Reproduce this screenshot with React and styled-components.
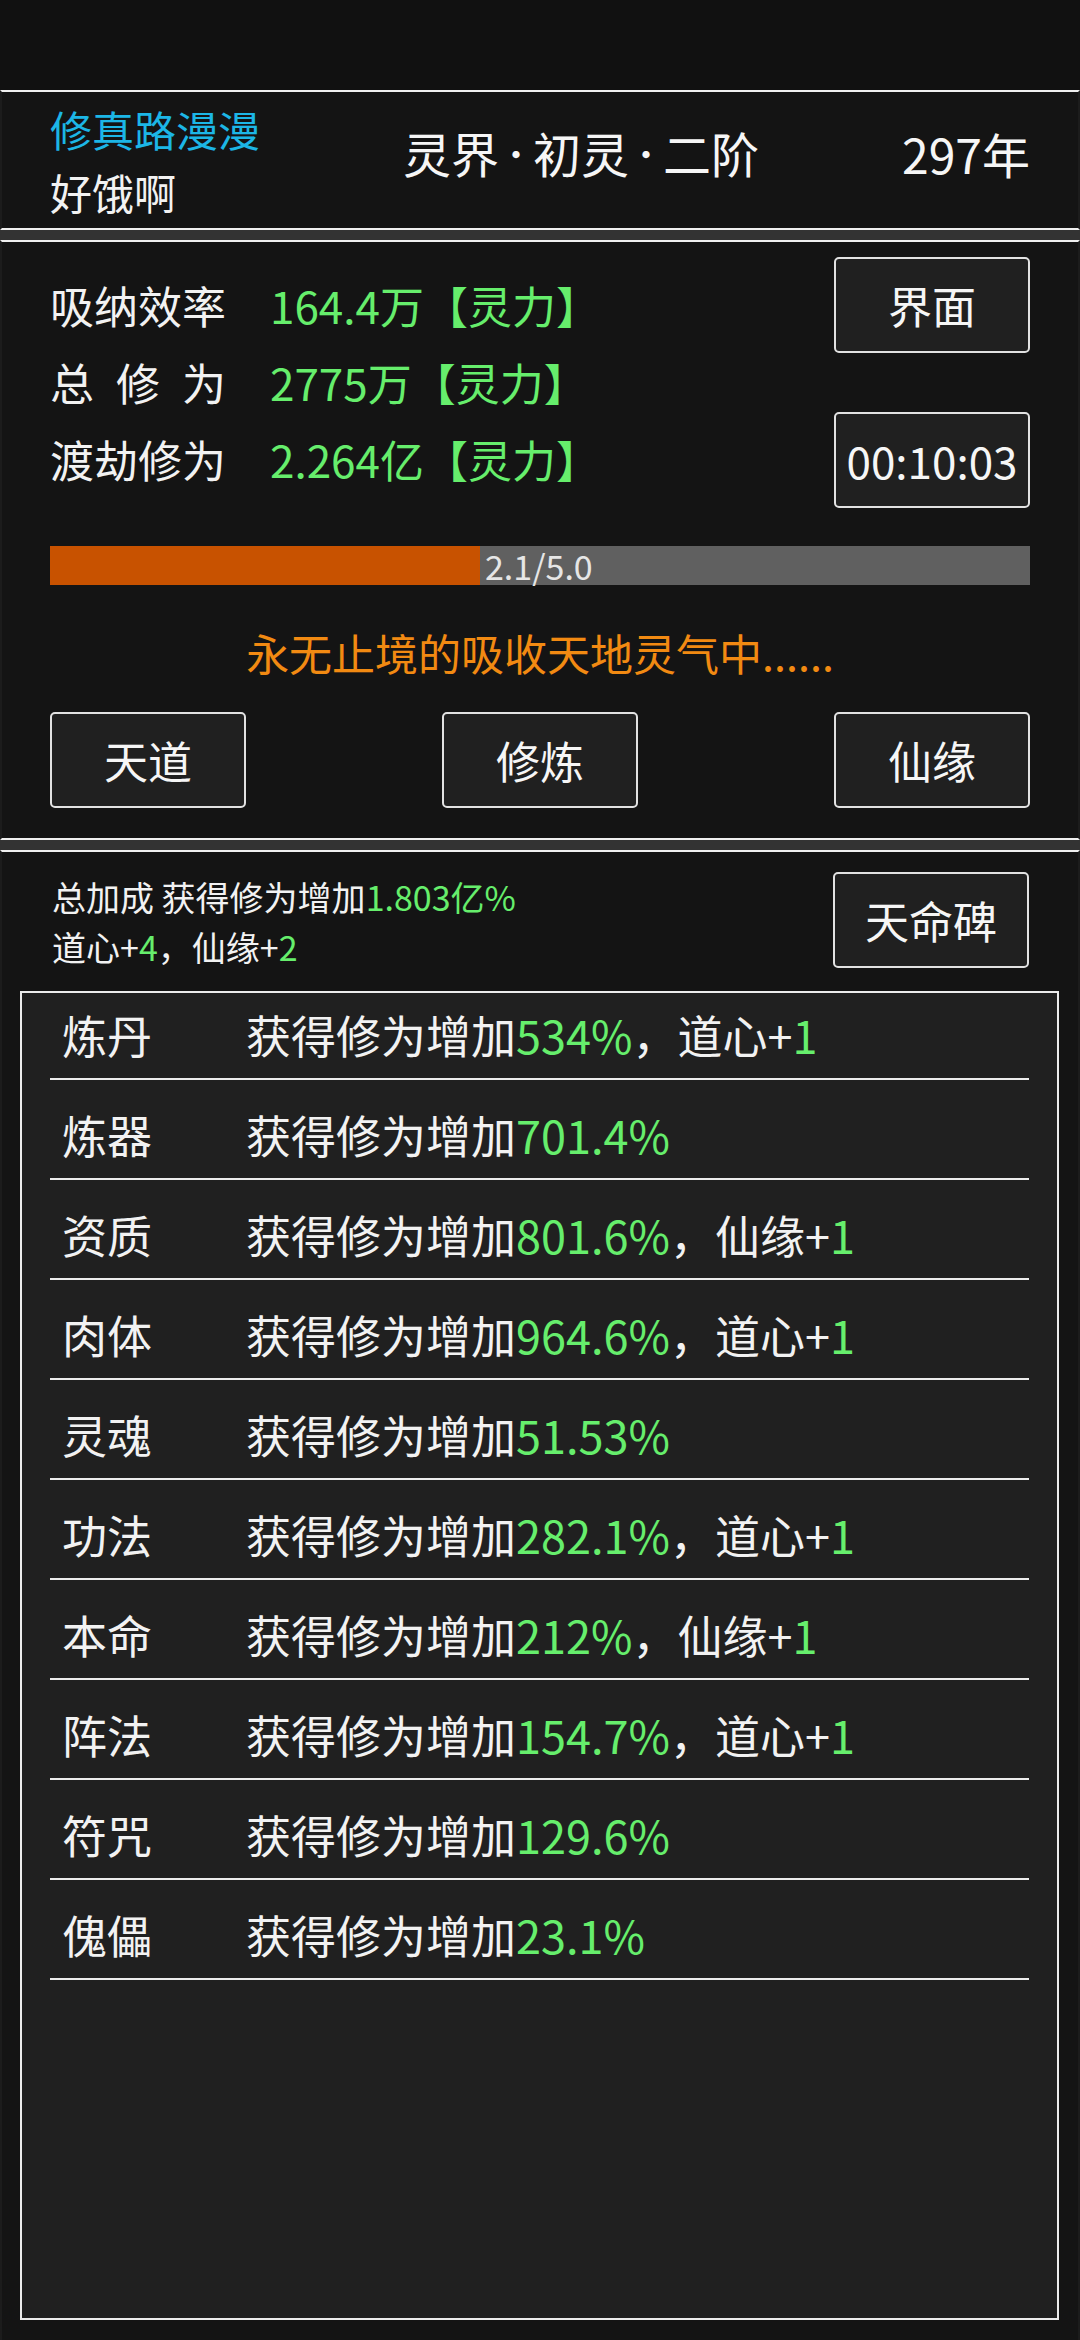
import React from 'react'
import styled, { createGlobalStyle } from 'styled-components'

const GlobalStyle = createGlobalStyle`
  html, body { margin: 0; padding: 0; background: #111; }
  body { font-family: "Noto Sans CJK SC", "Noto Sans", sans-serif; color: #f2f2f2; }
  * { box-sizing: border-box; }
`

const rows = [
  { name: '炼丹', pct: '534%', extra: '道心', add: '1' },
  { name: '炼器', pct: '701.4%' },
  { name: '资质', pct: '801.6%', extra: '仙缘', add: '1' },
  { name: '肉体', pct: '964.6%', extra: '道心', add: '1' },
  { name: '灵魂', pct: '51.53%' },
  { name: '功法', pct: '282.1%', extra: '道心', add: '1' },
  { name: '本命', pct: '212%', extra: '仙缘', add: '1' },
  { name: '阵法', pct: '154.7%', extra: '道心', add: '1' },
  { name: '符咒', pct: '129.6%' },
  { name: '傀儡', pct: '23.1%' },
]

const App = () => {
  return (
    <>
      <GlobalStyle />
      <Page>
        <TopBar />
        <Panel>
          <Header>
            <NameCol>
              <Nick>修真路漫漫</Nick>
              <Mood>好饿啊</Mood>
            </NameCol>
            <Realm>灵界<Dot>·</Dot>初灵<Dot>·</Dot>二阶</Realm>
            <Years>297年</Years>
          </Header>
        </Panel>
        <Gap />
        <Panel>
          <StatsArea>
            <Stats>
              <StatLine><Label>吸纳效率</Label><Value>164.4万【灵力】</Value></StatLine>
              <StatLine><Label>总 修 为</Label><Value>2775万【灵力】</Value></StatLine>
              <StatLine><Label>渡劫修为</Label><Value>2.264亿【灵力】</Value></StatLine>
            </Stats>
            <SideButtons>
              <Button>界面</Button>
              <Button>00:10:03</Button>
            </SideButtons>
          </StatsArea>
          <Track>
            <Fill style={{ width: 430 }} />
            <TrackText>2.1/5.0</TrackText>
          </Track>
          <Status>永无止境的吸收天地灵气中......</Status>
          <ButtonRow>
            <Button>天道</Button>
            <Button>修炼</Button>
            <Button>仙缘</Button>
          </ButtonRow>
        </Panel>
        <Gap />
        <LastPanel>
          <SummaryRow>
            <Summary>
              <div>总加成 获得修为增加<Green>1.803亿%</Green></div>
              <div>道心+<Green>4</Green>，仙缘+<Green>2</Green></div>
            </Summary>
            <Button>天命碑</Button>
          </SummaryRow>
          <ListBox>
            {rows.map((r) => (
              <Row key={r.name}>
                <RowName>{r.name}</RowName>
                <span>
                  获得修为增加<Green>{r.pct}</Green>
                  {r.extra && <>，{r.extra}+<Green>{r.add}</Green></>}
                </span>
              </Row>
            ))}
          </ListBox>
        </LastPanel>
      </Page>
    </>
  )
}

export default App

const Page = styled.div`
  min-height: 100vh;
  display: flex;
  flex-direction: column;
  background: #111;
`
const TopBar = styled.div`
  height: 90px;
  background: #111;
`
const Panel = styled.div`
  background: #141414;
  border-top: 2px solid #f0f0f0;
  border-bottom: 2px solid #f0f0f0;
  border-left: 2px solid #1c1c1c;
  border-right: 2px solid #1c1c1c;
  padding: 0 48px;
`
const LastPanel = styled(Panel)`
  flex: 1;
  display: flex;
  flex-direction: column;
  border-bottom: none;
  padding: 20px 19px 20px 18px;
`
const Gap = styled.div`
  height: 10px;
  background: #333;
`
const Header = styled.div`
  height: 136px;
  display: flex;
  align-items: center;
  justify-content: space-between;
`
const NameCol = styled.div`
  display: flex;
  flex-direction: column;
  font-size: 42px;
  line-height: 63px;
`
const Nick = styled.div`
  color: #1cb6e6;
`
const Mood = styled.div`
  color: #f2f2f2;
`
const Realm = styled.div`
  font-size: 48px;
  line-height: 60px;
  margin-bottom: 14px;
  color: #f6f6f6;
  white-space: nowrap;
`
const Dot = styled.span`
  font-size: 34px;
  vertical-align: 5px;
`
const Years = styled.div`
  font-size: 48px;
  line-height: 60px;
  margin-bottom: 14px;
  color: #f6f6f6;
`
const StatsArea = styled.div`
  display: flex;
  justify-content: space-between;
  align-items: center;
  padding-top: 15px;
`
const Stats = styled.div`
  display: flex;
  flex-direction: column;
  font-size: 44px;
  line-height: 77px;
`
const StatLine = styled.div`
  display: flex;
  align-items: center;
`
const Label = styled.span`
  width: 176px;
  margin-right: 44px;
  text-align: justify;
  text-align-last: justify;
  white-space: nowrap;
`
const Value = styled.span`
  color: #66ee6c;
`
const SideButtons = styled.div`
  display: flex;
  flex-direction: column;
  gap: 59px;
`
const Button = styled.div`
  width: 196px;
  height: 96px;
  display: flex;
  align-items: center;
  justify-content: center;
  background: #202020;
  border: 2px solid #e2e2e2;
  border-radius: 5px;
  font-size: 44px;
  color: #f6f6f6;
`
const Track = styled.div`
  margin-top: 38px;
  height: 39px;
  background: #606060;
  display: flex;
  align-items: center;
`
const Fill = styled.div`
  height: 100%;
  background: #c85200;
`
const TrackText = styled.span`
  margin-left: 5px;
  font-size: 34px;
  color: #e6e6e6;
  line-height: 39px;
`
const Status = styled.div`
  margin-top: 43px;
  text-align: center;
  font-size: 43px;
  line-height: 48px;
  color: #f28a12;
`
const ButtonRow = styled.div`
  margin-top: 36px;
  margin-bottom: 30px;
  display: flex;
  justify-content: space-between;
`
const SummaryRow = styled.div`
  display: flex;
  justify-content: space-between;
  align-items: flex-start;
  padding: 0 30px 0 32px;
`
const Summary = styled.div`
  font-size: 34px;
  line-height: 50px;
  color: #f2f2f2;
`
const Green = styled.span`
  color: #66ee6c;
`
const ListBox = styled.div`
  flex: 1;
  margin-top: 19px;
  background: #202020;
  border: 2px solid #ececec;
  padding: 0 28px;
`
const Row = styled.div`
  display: flex;
  align-items: center;
  padding: 25px 0 13px 12px;
  line-height: 60px;
  font-size: 45px;
  color: #f2f2f2;
  border-bottom: 2px solid #ececec;
  white-space: nowrap;
  &:first-child {
    padding-top: 12px;
  }
`
const RowName = styled.span`
  width: 184px;
`
